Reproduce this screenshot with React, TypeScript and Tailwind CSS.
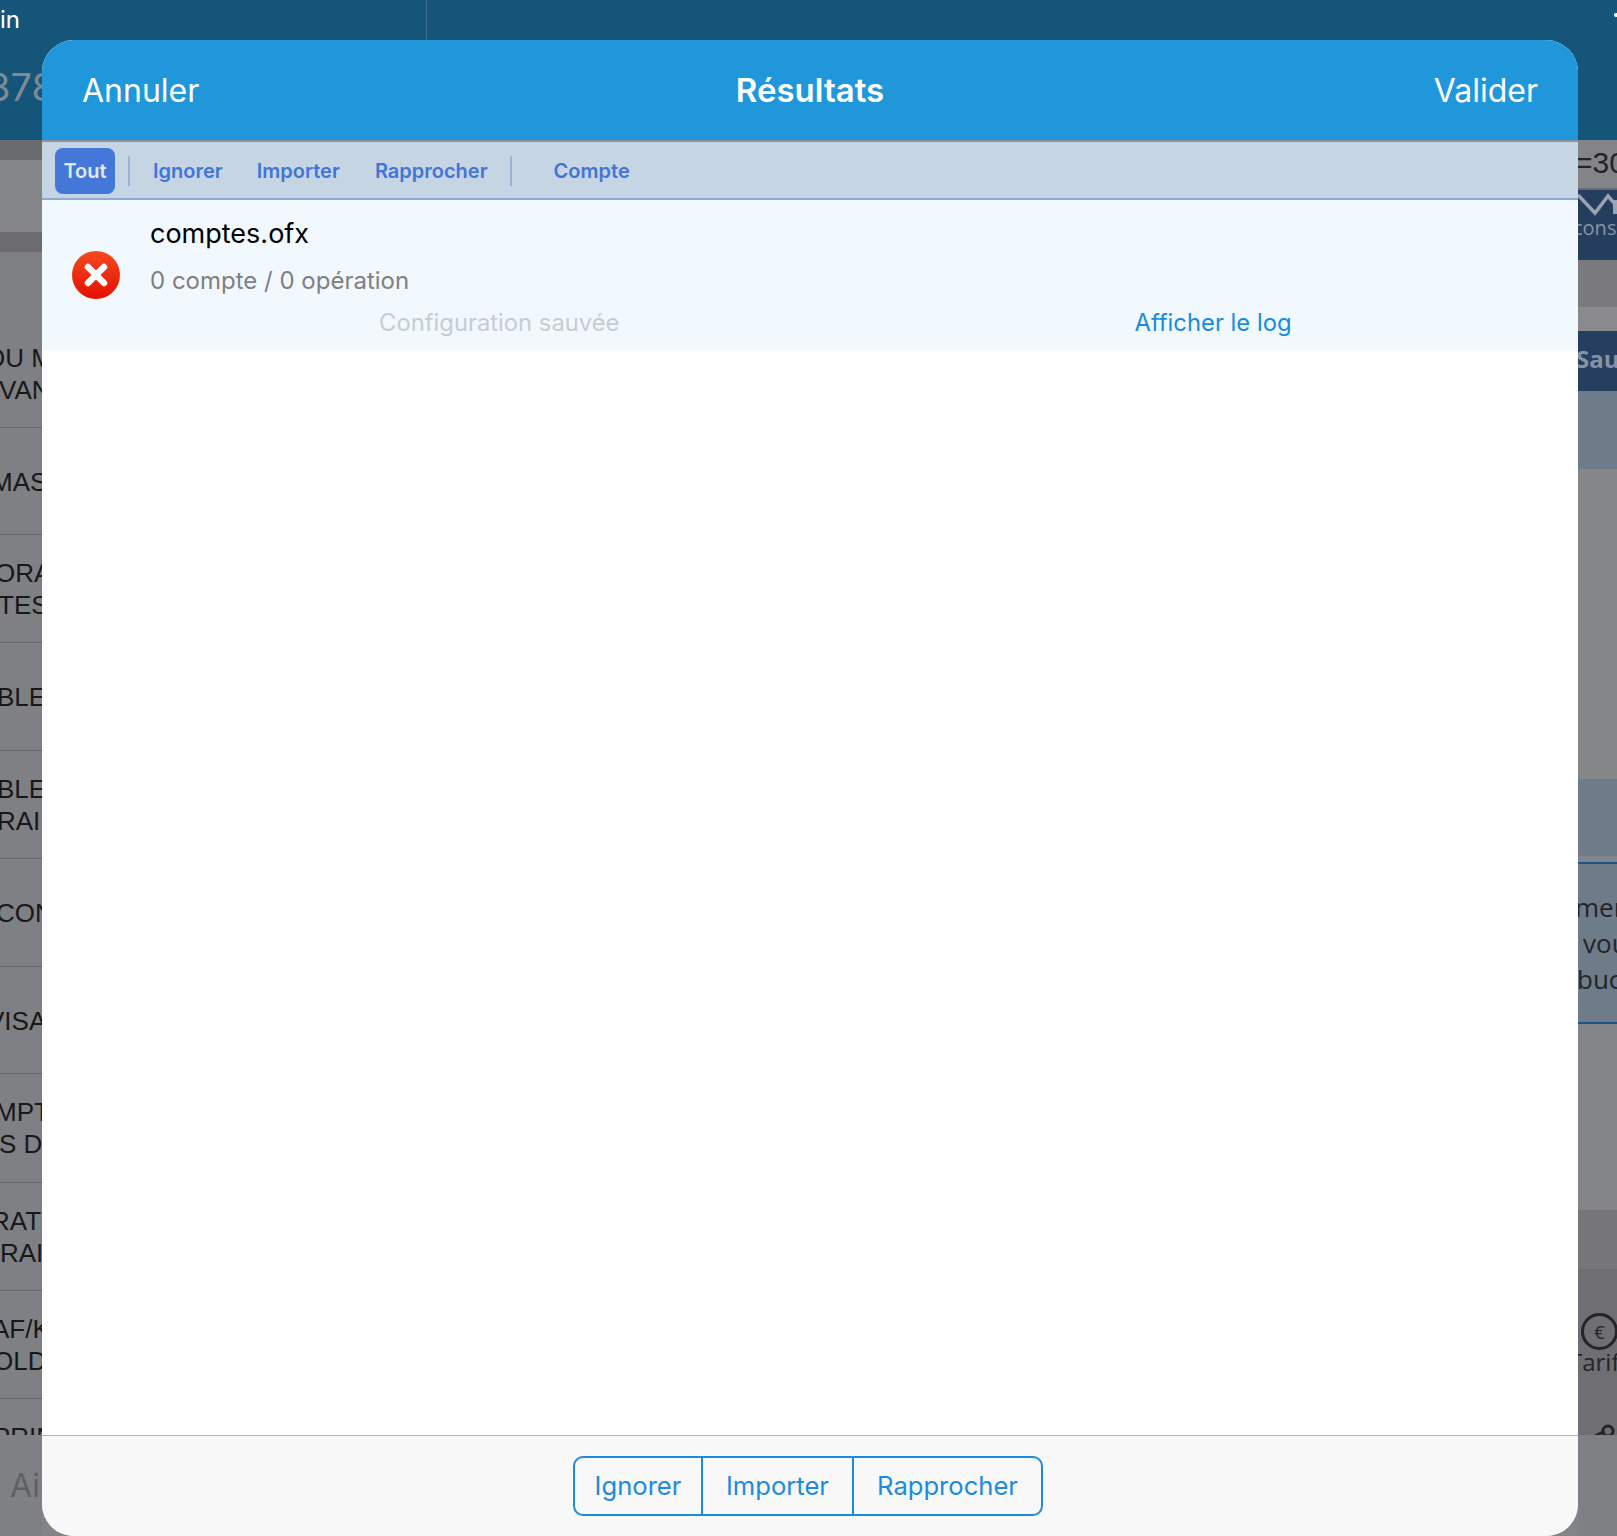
const leftRows = [
  { lines: [["OU M", "-ml-[15px]"], ["VAN", "-ml-[1px]"]], height: "h-[176px]", pad: "pt-[90px]" },
  { lines: [["MAS", "-ml-[9px]"]], height: "h-[107px]", pad: "pt-[38px]" },
  { lines: [["ORA", "-ml-[5px]"], ["TES", "-ml-[2px]"]], height: "h-[108px]", pad: "pt-[22px]" },
  { lines: [["BLE", "-ml-[3px]"]], height: "h-[108px]", pad: "pt-[38px]" },
  { lines: [["BLE", "-ml-[3px]"], ["RAI", "-ml-[3px]"]], height: "h-[108px]", pad: "pt-[22px]" },
  { lines: [["CON", "-ml-[4px]"]], height: "h-[108px]", pad: "pt-[38px]" },
  { lines: [["VISA", "-ml-[13px]"]], height: "h-[107px]", pad: "pt-[38px]" },
  { lines: [["MPT", "-ml-[5px]"], ["S D", "-ml-[1px]"]], height: "h-[109px]", pad: "pt-[22px]" },
  { lines: [["RAT", "-ml-[9px]"], ["RAI", "ml-0"]], height: "h-[108px]", pad: "pt-[22px]" },
  { lines: [["AF/K", "-ml-[8px]"], ["OLD", "-ml-[7px]"]], height: "h-[108px]", pad: "pt-[22px]" },
  { lines: [["PRIN", "-ml-[7px]"]], height: "h-[40px]", pad: "pt-[22px]" },
];

function LeftColumn() {
  return (
    <div className="flex h-full w-[42px] shrink-0 flex-col overflow-hidden bg-[#7f8084] font-['Liberation_Sans',sans-serif]">
      <div className="h-[20px] shrink-0 bg-[#6a6b6e]" />
      <div className="h-[72px] shrink-0 bg-[#858689]" />
      <div className="h-[20px] shrink-0 bg-[#6c6c70]" />
      <div className="flex-1 overflow-hidden">
        {leftRows.map((row, i) => (
          <div
            key={i}
            className={`${row.height} ${row.pad} w-[42px] shrink-0 overflow-hidden border-b border-[#66676a]`}
          >
            {row.lines.map(([text, offset]) => (
              <div key={text} className={`${offset} whitespace-nowrap text-[26px] leading-[32px] text-[#17181a]`}>
                {text}
              </div>
            ))}
          </div>
        ))}
      </div>
      <div className="flex h-[101px] shrink-0 items-center bg-[#7f8084] pl-[10px] font-['Inter',sans-serif] text-[32px] text-[#5f6064]">
        Aide
      </div>
    </div>
  );
}

function RightColumn() {
  return (
    <div className="flex h-full w-[39px] shrink-0 flex-col overflow-hidden bg-[#838487] font-['Open_Sans',sans-serif] text-[#232427]">
      <div className="-ml-[3px] h-[50px] shrink-0 border-b-2 border-[#6b6c6f] bg-[#838487] font-['Liberation_Sans',sans-serif] text-[30px] leading-[46px] whitespace-nowrap">
        =30
      </div>
      <div className="h-[70px] shrink-0 bg-[#253e5f] pt-[2px]">
        <svg width="39" height="24" viewBox="0 0 39 24" fill="none" className="block">
          <path d="M0 3 L17 21 L30 4 L37 12" stroke="#9aa3b0" strokeWidth="3.5" />
          <path d="M37 8 L37 22" stroke="#9aa3b0" strokeWidth="4" />
        </svg>
        <div className="-ml-[5px] -mt-[1px] whitespace-nowrap text-[20px] leading-[26px] text-[#8b95a3]">conse</div>
      </div>
      <div className="h-[47px] shrink-0 bg-[#7a7a7c]" />
      <div className="h-[24px] shrink-0 bg-[#8a8a8d]" />
      <div className="h-[60px] shrink-0 overflow-hidden whitespace-nowrap bg-[#263f60] pl-0 text-[24px] font-bold leading-[56px] text-[#8692a3]">
        <div className="-ml-[2px]">Sauv</div>
      </div>
      <div className="h-[78px] shrink-0 bg-[#6e7b88]" />
      <div className="h-[310px] shrink-0 bg-[#858688]" />
      <div className="h-[77px] shrink-0 bg-[#6e7b88]" />
      <div className="h-[6px] shrink-0 bg-[#7d858e]" />
      <div className="flex h-[162px] shrink-0 flex-col justify-center border-y-2 border-[#1f5286] bg-[#6e7b88] text-[26px] leading-[36px] whitespace-nowrap">
        <div className="-ml-[3px]">men</div>
        <div className="ml-[5px]">vou</div>
        <div className="-ml-[1px]">buc</div>
      </div>
      <div className="h-[186px] shrink-0 bg-[#838487]" />
      <div className="h-[59px] shrink-0 bg-[#767678]" />
      <div className="flex-1 overflow-hidden bg-[#6f6f73] pt-[44px]">
        <div className="ml-[3px] flex h-[37px] w-[37px] items-center justify-center rounded-full border-[3px] border-[#232427] text-[18px] leading-none">
          €
        </div>
        <div className="-ml-[9px] -mt-[3px] whitespace-nowrap text-[24px] leading-[30px]">Tarif</div>
        <svg width="39" height="12" viewBox="0 0 39 12" fill="none" className="mt-[46px] block">
          <circle cx="30" cy="8" r="5" stroke="#232427" strokeWidth="3" />
          <path d="M17 13 L25 9" stroke="#232427" strokeWidth="3" />
        </svg>
      </div>
      <div className="h-[101px] shrink-0 bg-[#7f8084]" />
    </div>
  );
}

function ErrorIcon() {
  return (
    <svg width="48" height="48" viewBox="0 0 48 48" className="block">
      <defs>
        <linearGradient id="err" x1="0" y1="0" x2="0" y2="1">
          <stop offset="0" stopColor="#f4491f" />
          <stop offset="1" stopColor="#e50f02" />
        </linearGradient>
      </defs>
      <circle cx="24" cy="24" r="24" fill="url(#err)" />
      <path d="M16 16 L32 32 M32 16 L16 32" stroke="#fff" strokeWidth="6.5" strokeLinecap="round" />
    </svg>
  );
}

function Modal() {
  return (
    <div className="absolute left-[42px] top-[40px] flex h-[1496px] w-[1536px] flex-col overflow-hidden rounded-[32px] bg-white">
      <div className="grid h-[100px] shrink-0 grid-cols-3 items-center bg-[#2097db] px-[40px] pt-[2px] text-[32px] text-white">
        <span>Annuler</span>
        <span className="text-center text-[33px] font-semibold">Résultats</span>
        <span className="text-right">Valider</span>
      </div>
      <div className="flex h-[60px] shrink-0 items-center border-y-2 border-t-[#8f9498] border-b-[#8fa9cf] bg-[#c6d5e4] pl-[13px] pt-[2px] text-[20px] font-semibold text-[#4175d6]">
        <span className="flex h-[46px] w-[60px] items-center justify-center rounded-[8px] bg-[#4378d8] text-[#dfe8f7]">
          Tout
        </span>
        <span className="ml-[13px] h-[30px] w-[2px] bg-[#9db3d2]" />
        <span className="ml-[23px]">Ignorer</span>
        <span className="ml-[34px]">Importer</span>
        <span className="ml-[35px]">Rapprocher</span>
        <span className="ml-[22px] h-[30px] w-[2px] bg-[#9db3d2]" />
        <span className="ml-[42px]">Compte</span>
      </div>
      <div className="flex h-[150px] shrink-0 bg-[#f1f9fe]">
        <div className="flex w-[108px] shrink-0 items-center pl-[30px]">
          <ErrorIcon />
        </div>
        <div className="flex flex-1 flex-col">
          <div className="pt-[16px] text-[27px] leading-[36px] text-black">comptes.ofx</div>
          <div className="mt-[13px] text-[24px] leading-[32px] text-[#808080]">0 compte / 0 opération</div>
          <div className="mt-[10px] flex text-[23.8px] leading-[32px]">
            <span className="ml-[229px] text-[#c8ccd0]">Configuration sauvée</span>
            <span className="ml-[515px] text-[#1b8bdc]">Afficher le log</span>
          </div>
        </div>
      </div>
      <div className="flex-1" />
      <div className="flex h-[101px] shrink-0 border-t border-[#b2b2b2] bg-[#f8f8f8] pl-[531px] pt-[20px]">
        <div className="flex h-[60px] rounded-[10px] border-2 border-[#1b8bdc] text-[25.6px] text-[#1b8bdc]">
          <div className="flex w-[128px] items-center justify-center border-r-2 border-[#1b8bdc]">Ignorer</div>
          <div className="flex w-[151px] items-center justify-center border-r-2 border-[#1b8bdc]">Importer</div>
          <div className="flex w-[187px] items-center justify-center">Rapprocher</div>
        </div>
      </div>
    </div>
  );
}

export default function App() {
  return (
    <div className="relative flex h-[1536px] w-[1617px] flex-col overflow-hidden bg-[#838487] font-['Inter','Noto_Sans',sans-serif]">
      <div className="h-[140px] shrink-0 bg-[#15557a]">
        <div className="flex h-[40px] items-center justify-between">
          <div className="h-full w-[427px] border-r border-[#3f6f8b] text-[24px] leading-[40px] text-white">in</div>
          <div className="mb-[10px] mr-[-1px] h-[4px] w-[4px] rounded-full bg-white" />
        </div>
        <div className="-ml-[13px] mt-[25px] w-[60px] overflow-hidden whitespace-nowrap text-[38px] leading-[44px] text-[#7f8a92]">
          378
        </div>
      </div>
      <div className="flex min-h-0 flex-1 justify-between">
        <LeftColumn />
        <RightColumn />
      </div>
      <Modal />
    </div>
  );
}
